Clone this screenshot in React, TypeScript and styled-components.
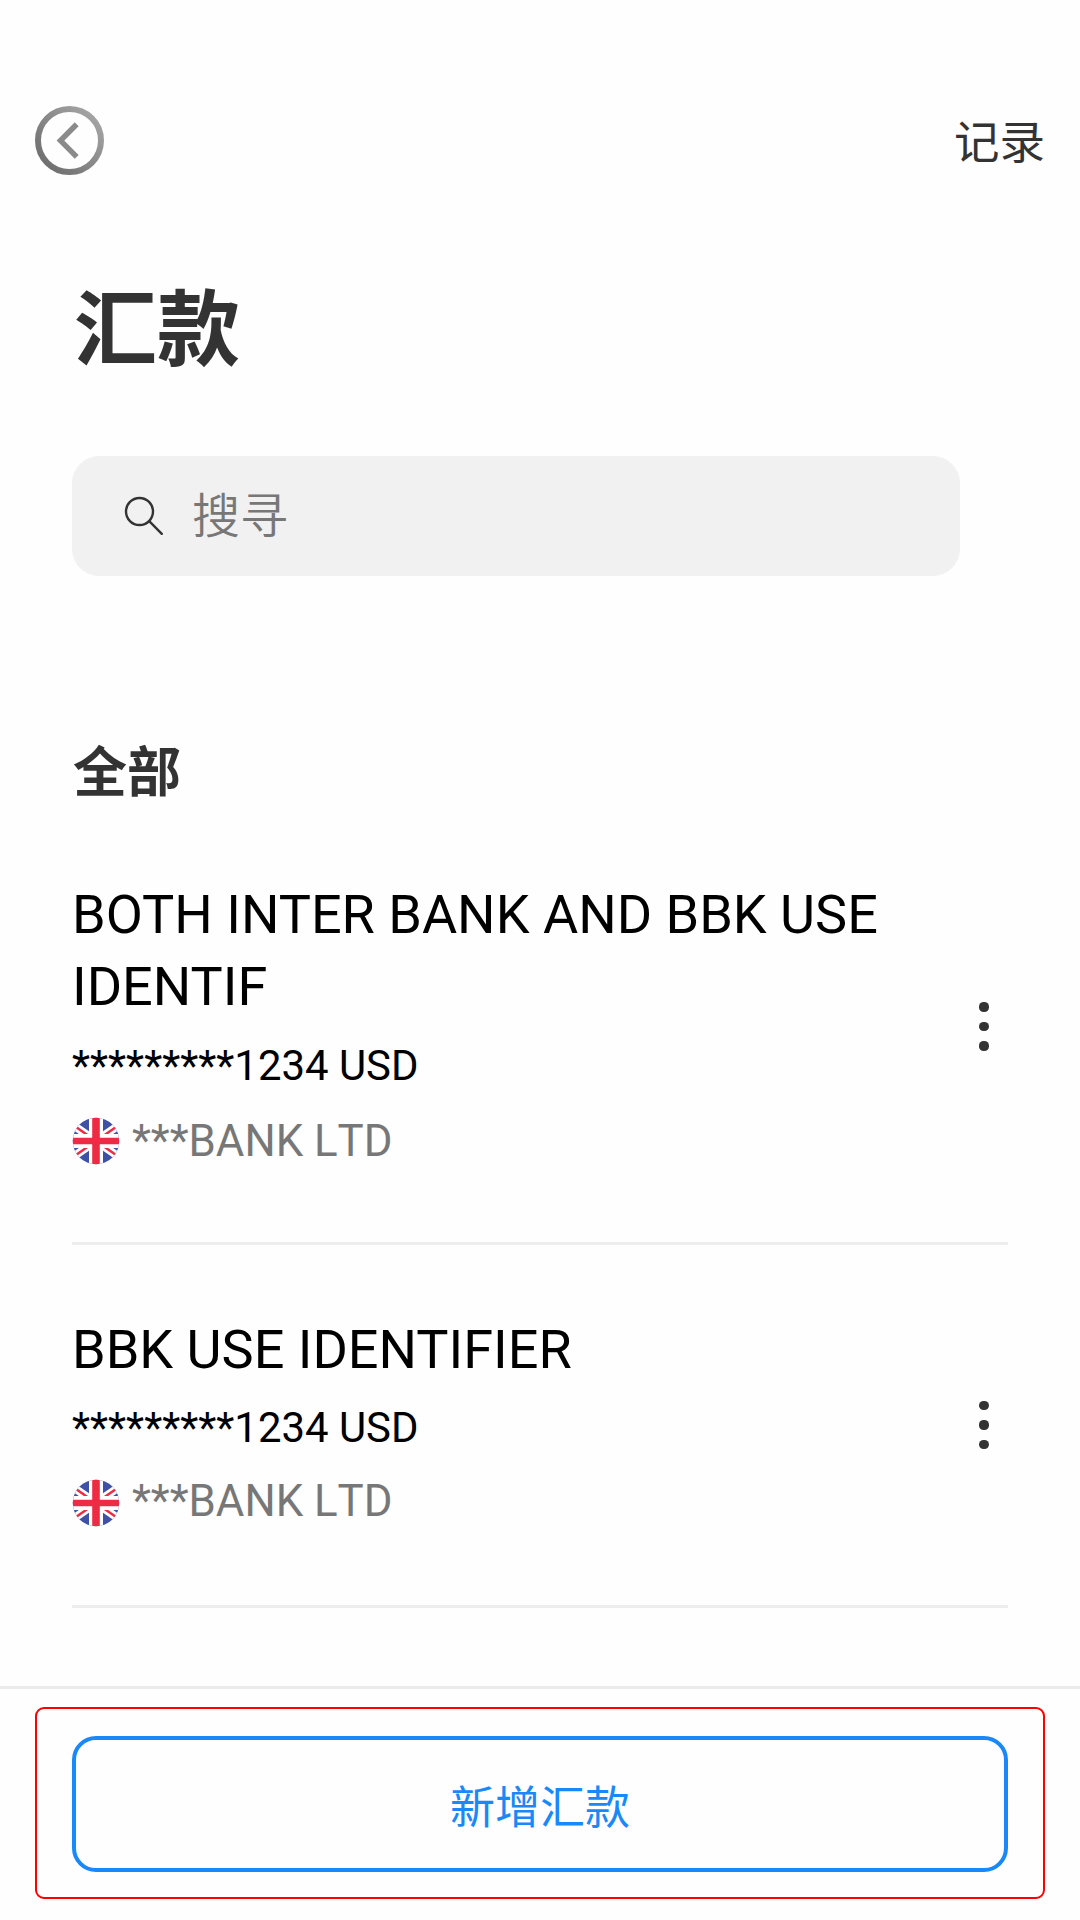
import React from "react";
import styled, { createGlobalStyle } from "styled-components";

const GlobalStyle = createGlobalStyle`
  * { box-sizing: border-box; }
  body {
    margin: 0;
    background: #fefefe;
    font-family: Roboto, "Noto Sans CJK SC", sans-serif;
  }
  button { font-family: inherit; border: 0; background: none; padding: 0; }
`;

const Screen = styled.main`
  display: flex;
  flex-direction: column;
  width: 1080px;
  height: 1920px;
  background: #fefefe;
  overflow: hidden;
`;

const TopBar = styled.header`
  display: flex;
  align-items: center;
  justify-content: space-between;
  height: 71px;
  margin-top: 105px;
  padding: 0 35px 0 34px;
`;

const BackButton = styled.button`
  display: flex;
`;

const RecordLink = styled.button`
  font-size: 45.5px;
  line-height: 60px;
  color: #333;
  padding-top: 6px;
`;

const Content = styled.section`
  display: flex;
  flex-direction: column;
  flex: 1;
  min-height: 0;
  padding: 0 72px;
`;

const Title = styled.h1`
  margin: 95px 0 0 2px;
  font-size: 83px;
  line-height: 120px;
  font-weight: 700;
  color: #333;
`;

const SearchBox = styled.label`
  display: flex;
  align-items: center;
  width: 888px;
  height: 120px;
  margin-top: 65px;
  padding: 0 52px;
  gap: 28px;
  border-radius: 27px;
  background: #f1f1f1;
`;

const SearchInput = styled.span`
  font-family: "Noto Sans CJK SC", sans-serif;
  font-weight: 350;
  font-size: 48px;
  line-height: 60px;
  padding-bottom: 9px;
  color: #777;
`;

const SectionTitle = styled.h2`
  margin: 158px 0 0 1px;
  font-size: 54px;
  line-height: 80px;
  font-weight: 700;
  color: #333;
`;

const PayeeList = styled.ul`
  list-style: none;
  margin: 0;
  padding: 0;
`;

const PayeeRow = styled.li<{ $padTop: number; $padBottom: number }>`
  display: flex;
  align-items: center;
  justify-content: space-between;
  padding: ${(p) => p.$padTop}px 0 ${(p) => p.$padBottom}px;
  border-bottom: 3px solid #ededed;
`;

const PayeeInfo = styled.div`
  display: flex;
  flex-direction: column;
  width: 850px;
`;

const PayeeName = styled.div`
  font-size: 54px;
  line-height: 72px;
  color: #000;
`;

const Account = styled.div<{ $gap: number }>`
  margin-top: ${(p) => p.$gap}px;
  font-size: 41.9px;
  line-height: 60px;
  color: #000;
`;

const Bank = styled.div<{ $lift: number }>`
  display: flex;
  align-items: center;
  gap: 12px;
  height: 60px;
  margin-top: 15px;
  font-size: 43.8px;
  line-height: 56px;
  font-kerning: none;
  color: #777;

  span { padding-bottom: ${(p) => p.$lift}px; }
`;

const MoreButton = styled.button`
  display: flex;
  flex-direction: column;
  gap: 10.4px;
  margin: 3px 19.4px 0 0;
`;

const Dot = styled.span`
  width: 9.2px;
  height: 9.2px;
  border-radius: 50%;
  background: #333;
`;

const Footer = styled.footer`
  height: 234px;
  padding: 18px 35px 0;
  border-top: 3px solid #ebebeb;
`;

const Highlight = styled.div`
  height: 192px;
  padding: 27px 35px;
  border: 2px solid #f00;
  border-radius: 9px;
`;

const AddButton = styled.button`
  width: 100%;
  height: 136px;
  border: 4px solid #1989fa;
  border-radius: 24px;
  color: #1989fa;
  font-size: 45px;
  line-height: 60px;
  padding-top: 10px;
`;

const BackIcon = () => (
  <svg width="71" height="71" viewBox="0 0 71 71" fill="none">
    <defs>
      <linearGradient id="back" x1="8" y1="62" x2="62" y2="8" gradientUnits="userSpaceOnUse">
        <stop offset="0" stopColor="#6c6c6c" />
        <stop offset="1" stopColor="#a6a6a6" />
      </linearGradient>
    </defs>
    <circle cx="35.5" cy="35.5" r="31.5" stroke="url(#back)" strokeWidth="6" />
    <path d="M42.7 19.3L26.5 35.6L42.7 51.9" stroke="#8b8b8b" strokeWidth="5.5" />
  </svg>
);

const SearchIcon = () => (
  <svg width="40" height="40" viewBox="0 0 40 40" fill="none" stroke="#333" strokeWidth="2.4">
    <circle cx="15.5" cy="15.5" r="13.5" />
    <path d="M25.2 25.2L37.8 37.8" strokeLinecap="round" />
  </svg>
);

const Flag = () => (
  <svg width="48" height="48" viewBox="0 0 48 48">
    <clipPath id="disc">
      <circle cx="24" cy="24" r="23.2" />
    </clipPath>
    <g clipPath="url(#disc)">
      <rect width="48" height="48" fill="#3f51a5" />
      <path d="M-4 4.5L52 43.5M52 4.5L-4 43.5" stroke="#fff" strokeWidth="8" />
      <path d="M-4 4.5L52 43.5M52 4.5L-4 43.5" stroke="#ed2b45" strokeWidth="2.6" />
      <path d="M24 0V48M0 24H48" stroke="#fff" strokeWidth="14" />
      <path d="M24 0V48" stroke="#ed2b45" strokeWidth="7.6" />
      <path d="M0 24H48" stroke="#ed2b45" strokeWidth="6.4" />
    </g>
  </svg>
);

const payees = [
  { name: "BOTH INTER BANK AND BBK USE IDENTIF", padTop: 65, padBottom: 71, gap: 13, lift: 0 },
  { name: "BBK USE IDENTIFIER", padTop: 69, padBottom: 72, gap: 12, lift: 4 },
];

export default function App() {
  return (
    <Screen lang="zh-CN">
      <GlobalStyle />
      <TopBar>
        <BackButton aria-label="返回"><BackIcon /></BackButton>
        <RecordLink>记录</RecordLink>
      </TopBar>
      <Content>
        <Title>汇款</Title>
        <SearchBox>
          <SearchIcon />
          <SearchInput>搜寻</SearchInput>
        </SearchBox>
        <SectionTitle>全部</SectionTitle>
        <PayeeList>
          {payees.map((p) => (
            <PayeeRow key={p.name} $padTop={p.padTop} $padBottom={p.padBottom}>
              <PayeeInfo>
                <PayeeName>{p.name}</PayeeName>
                <Account $gap={p.gap}>*********1234 USD</Account>
                <Bank $lift={p.lift}><Flag /><span>***BANK LTD</span></Bank>
              </PayeeInfo>
              <MoreButton aria-label="更多"><Dot /><Dot /><Dot /></MoreButton>
            </PayeeRow>
          ))}
        </PayeeList>
      </Content>
      <Footer>
        <Highlight>
          <AddButton>新增汇款</AddButton>
        </Highlight>
      </Footer>
    </Screen>
  );
}
